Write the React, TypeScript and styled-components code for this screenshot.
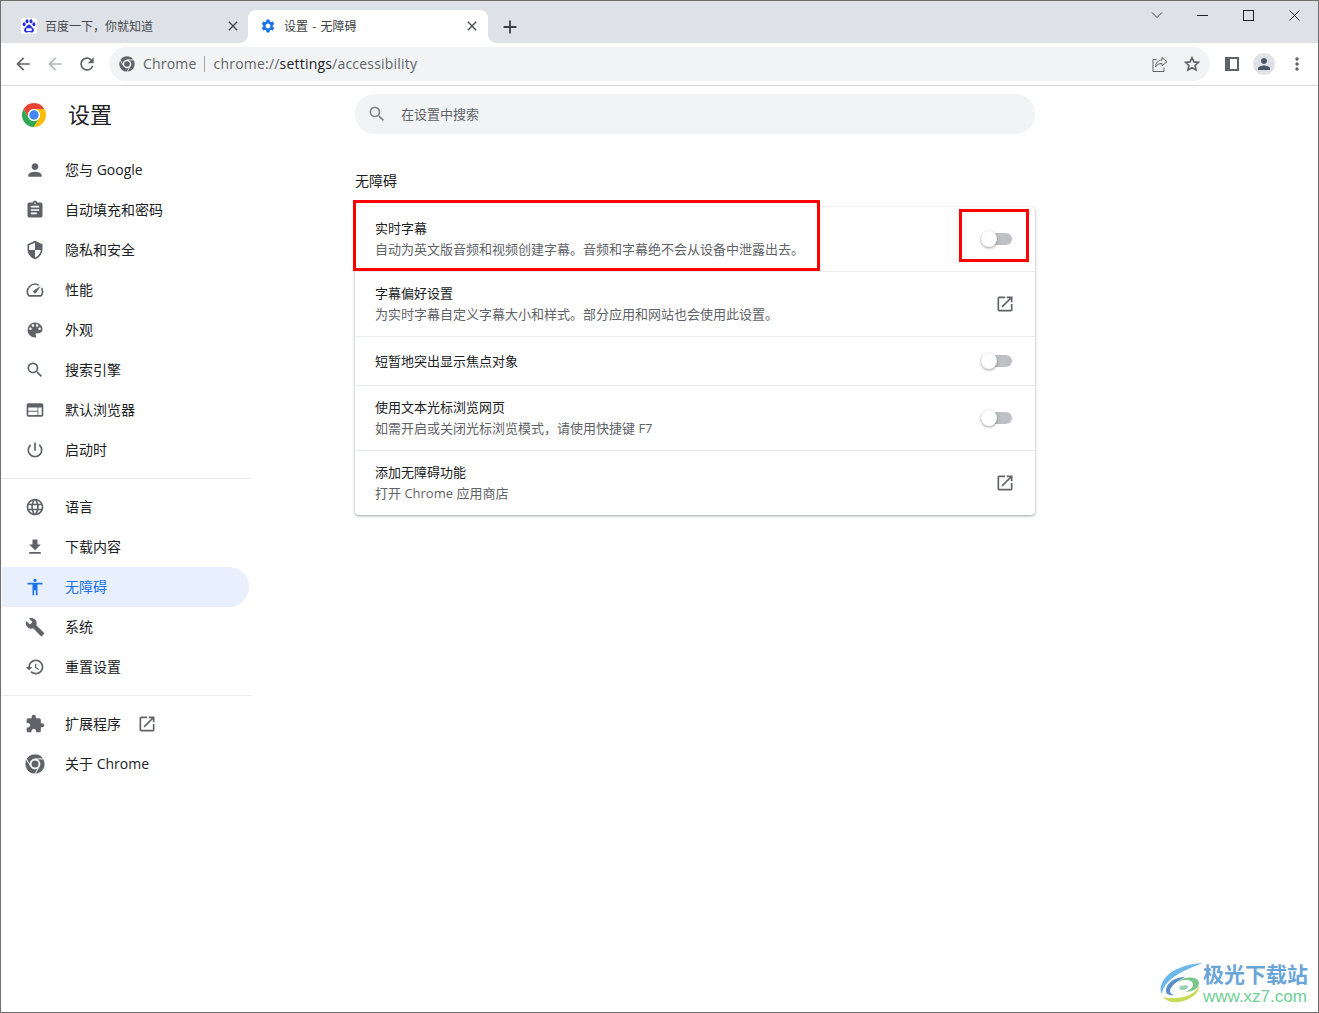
import React from 'react';
import styled, { createGlobalStyle } from 'styled-components';

const Global = createGlobalStyle`
  html, body { margin: 0; padding: 0; background: #fff; }
  * { box-sizing: border-box; }
  body { font-family: "Open Sans", "Noto Sans CJK SC", sans-serif; }
`;

const P = {
  person: 'M12 12c2.21 0 4-1.79 4-4s-1.79-4-4-4-4 1.79-4 4 1.79 4 4 4zm0 2c-2.67 0-8 1.34-8 4v2h16v-2c0-2.66-5.33-4-8-4z',
  assignment: 'M19 3h-4.18C14.4 1.84 13.3 1 12 1c-1.3 0-2.4.84-2.82 2H5c-1.1 0-2 .9-2 2v14c0 1.1.9 2 2 2h14c1.1 0 2-.9 2-2V5c0-1.1-.9-2-2-2zm-7 0c.55 0 1 .45 1 1s-.45 1-1 1-1-.45-1-1 .45-1 1-1zm2 14H7v-2h7v2zm3-4H7v-2h10v2zm0-4H7V7h10v2z',
  shield: 'M12 1L3 5v6c0 5.55 3.84 10.74 9 12 5.16-1.26 9-6.45 9-12V5l-9-4zm0 10.99h7c-.53 4.12-3.28 7.79-7 8.94V12H5V6.3l7-3.11v8.8z',
  speed: 'M20.38 8.57l-1.23 1.85a8 8 0 0 1-.22 7.58H5.07A8 8 0 0 1 15.58 6.85l1.85-1.23A10 10 0 0 0 3.35 19a2 2 0 0 0 1.72 1h13.85a2 2 0 0 0 1.74-1 10 10 0 0 0-.27-10.44zm-9.79 6.84a2 2 0 0 0 2.83 0l5.66-8.49-8.49 5.66a2 2 0 0 0 0 2.83z',
  palette: 'M12 3a9 9 0 0 0 0 18c.83 0 1.5-.67 1.5-1.5 0-.39-.15-.74-.39-1.01-.23-.26-.38-.61-.38-.99 0-.83.67-1.5 1.5-1.5H16c2.76 0 5-2.24 5-5 0-4.42-4.03-8-9-8zm-5.5 9c-.83 0-1.5-.67-1.5-1.5S5.67 9 6.5 9 8 9.67 8 10.5 7.33 12 6.5 12zm3-4C8.67 8 8 7.33 8 6.5S8.67 5 9.5 5s1.5.67 1.5 1.5S10.33 8 9.5 8zm5 0c-.83 0-1.5-.67-1.5-1.5S13.67 5 14.5 5s1.5.67 1.5 1.5S15.33 8 14.5 8zm3 4c-.83 0-1.5-.67-1.5-1.5S16.67 9 17.5 9s1.5.67 1.5 1.5-.67 1.5-1.5 1.5z',
  search: 'M15.5 14h-.79l-.28-.27A6.471 6.471 0 0 0 16 9.5 6.5 6.5 0 1 0 9.5 16c1.61 0 3.09-.59 4.23-1.57l.27.28v.79l5 4.99L20.49 19l-4.99-5zm-6 0C7.01 14 5 11.99 5 9.5S7.01 5 9.5 5 14 7.01 14 9.5 11.99 14 9.5 14z',
  web: 'M20 4H4c-1.11 0-2 .9-2 2v12c0 1.1.89 2 2 2h16c1.1 0 2-.9 2-2V6c0-1.1-.89-2-2-2zm-5 14H4v-4h11v4zm0-5H4V9h11v4zm5 5h-4V9h4v9z',
  power: 'M13 3h-2v10h2V3zm4.83 2.17l-1.42 1.42C17.99 7.86 19 9.81 19 12c0 3.87-3.13 7-7 7s-7-3.13-7-7c0-2.19 1.01-4.14 2.58-5.42L6.17 5.17C4.23 6.82 3 9.26 3 12c0 4.97 4.03 9 9 9s9-4.03 9-9c0-2.74-1.23-5.18-3.17-6.83z',
  language: 'M11.99 2C6.47 2 2 6.48 2 12s4.47 10 9.99 10C17.52 22 22 17.52 22 12S17.52 2 11.99 2zm6.93 6h-2.95c-.32-1.25-.78-2.45-1.38-3.56 1.84.63 3.37 1.91 4.33 3.56zM12 4.04c.83 1.2 1.48 2.53 1.91 3.96h-3.82c.43-1.43 1.08-2.76 1.91-3.96zM4.26 14C4.1 13.36 4 12.69 4 12s.1-1.36.26-2h3.38c-.08.66-.14 1.32-.14 2 0 .68.06 1.34.14 2H4.26zm.82 2h2.95c.32 1.25.78 2.45 1.38 3.56-1.84-.63-3.37-1.9-4.33-3.56zm2.95-8H5.08c.96-1.66 2.49-2.93 4.33-3.56C8.81 5.55 8.35 6.75 8.03 8zM12 19.96c-.83-1.2-1.48-2.53-1.91-3.96h3.82c-.43 1.43-1.08 2.76-1.91 3.96zM14.34 14H9.66c-.09-.66-.16-1.32-.16-2 0-.68.07-1.35.16-2h4.68c.09.65.16 1.32.16 2 0 .68-.07 1.34-.16 2zm.25 5.56c.6-1.11 1.06-2.31 1.38-3.56h2.95c-.96 1.65-2.49 2.93-4.33 3.56zM16.36 14c.08-.66.14-1.32.14-2 0-.68-.06-1.34-.14-2h3.38c.16.64.26 1.31.26 2s-.1 1.36-.26 2h-3.38z',
  download: 'M19 9h-4V3H9v6H5l7 7 7-7zM5 18v2h14v-2H5z',
  access: 'M12 2c1.1 0 2 .9 2 2s-.9 2-2 2-2-.9-2-2 .9-2 2-2zm9 7h-6v13h-2v-6h-2v6H9V9H3V7h18v2z',
  build: 'M22.7 19l-9.1-9.1c.9-2.3.4-5-1.5-6.9-2-2-5-2.4-7.4-1.3L9 6 6 9 1.6 4.7C.4 7.1.9 10.1 2.9 12.1c1.9 1.9 4.6 2.4 6.9 1.5l9.1 9.1c.4.4 1 .4 1.4 0l2.3-2.3c.5-.4.5-1.1.1-1.4z',
  restore: 'M13 3c-4.97 0-9 4.03-9 9H1l3.89 3.89.07.14L9 12H6c0-3.87 3.13-7 7-7s7 3.13 7 7-3.13 7-7 7c-1.93 0-3.68-.79-4.94-2.06l-1.42 1.42C8.27 19.99 10.51 21 13 21c4.97 0 9-4.03 9-9s-4.03-9-9-9zm-1 5v5l4.28 2.54.72-1.21-3.5-2.08V8H12z',
  extension: 'M20.5 11H19V7c0-1.1-.9-2-2-2h-4V3.5C13 2.12 11.88 1 10.5 1S8 2.12 8 3.5V5H4c-1.1 0-1.99.9-1.99 2v3.8H3.5c1.49 0 2.7 1.21 2.7 2.7s-1.21 2.7-2.7 2.7H2V20c0 1.1.9 2 2 2h3.8v-1.5c0-1.49 1.21-2.7 2.7-2.7 1.49 0 2.7 1.21 2.7 2.7V22H17c1.1 0 2-.9 2-2v-4h1.5c1.38 0 2.5-1.12 2.5-2.5S21.88 11 20.5 11z',
  open: 'M19 19H5V5h7V3H5a2 2 0 0 0-2 2v14a2 2 0 0 0 2 2h14c1.1 0 2-.9 2-2v-7h-2v7zM14 3v2h3.59l-9.83 9.83 1.41 1.41L19 6.41V10h2V3h-7z',
  gear: 'M19.14 12.94c.04-.3.06-.61.06-.94 0-.32-.02-.64-.07-.94l2.03-1.58a.49.49 0 0 0 .12-.61l-1.92-3.32a.488.488 0 0 0-.59-.22l-2.39.96c-.5-.38-1.03-.7-1.62-.94l-.36-2.54a.484.484 0 0 0-.48-.41h-3.84c-.24 0-.43.17-.47.41l-.36 2.54c-.59.24-1.13.57-1.62.94l-2.39-.96c-.22-.08-.47 0-.59.22L2.74 8.87c-.12.21-.08.47.12.61l2.03 1.58c-.05.3-.09.63-.09.94s.02.64.07.94l-2.03 1.58a.49.49 0 0 0-.12.61l1.92 3.32c.12.22.37.29.59.22l2.39-.96c.5.38 1.03.7 1.62.94l.36 2.54c.05.24.24.41.48.41h3.84c.24 0 .44-.17.47-.41l.36-2.54c.59-.24 1.13-.56 1.62-.94l2.39.96c.22.08.47 0 .59-.22l1.92-3.32c.12-.22.07-.47-.12-.61l-2.01-1.58zM12 15.6c-1.98 0-3.6-1.62-3.6-3.6s1.62-3.6 3.6-3.6 3.6 1.62 3.6 3.6-1.62 3.6-3.6 3.6z',
  reload: 'M17.65 6.35A7.958 7.958 0 0 0 12 4c-4.42 0-7.99 3.58-7.99 8s3.57 8 7.99 8c3.73 0 6.84-2.55 7.73-6h-2.08A5.99 5.99 0 0 1 12 18c-3.31 0-6-2.69-6-6s2.69-6 6-6c1.66 0 3.14.69 4.22 1.78L13 11h7V4l-2.35 2.35z',
  arrow: 'M20 11H7.83l5.59-5.59L12 4l-8 8 8 8 1.41-1.41L7.83 13H20v-2z',
  more: 'M12 8c1.1 0 2-.9 2-2s-.9-2-2-2-2 .9-2 2 .9 2 2 2zm0 2c-1.1 0-2 .9-2 2s.9 2 2 2 2-.9 2-2-.9-2-2-2zm0 6c-1.1 0-2 .9-2 2s.9 2 2 2 2-.9 2-2-.9-2-2-2z',
  plus: 'M19 13h-6v6h-2v-6H5v-2h6V5h2v6h6v2z',
  close: 'M19 6.41L17.59 5 12 10.59 6.41 5 5 6.41 10.59 12 5 17.59 6.41 19 12 13.41 17.59 19 19 17.59 13.41 12z',
};

const Icon = ({ d, size = 20, color = '#5f6368' }: { d: string; size?: number; color?: string }) => (
  <svg width={size} height={size} viewBox="0 0 24 24" fill={color} style={{ display: 'block', flex: 'none' }}>
    <path d={d} />
  </svg>
);

const ChromeColor = ({ size }: { size: number }) => (
  <svg width={size} height={size} viewBox="0 0 24 24" style={{ display: 'block' }}>
    <path fill="#ea4335" d="M12 6H22.39A12 12 0 0 0 1.6 6L6.8 15A6 6 0 0 1 12 6Z" />
    <path fill="#34a853" d="M6.8 15L1.6 6A12 12 0 0 0 12 24L17.2 15A6 6 0 0 1 6.8 15Z" />
    <path fill="#fbbc04" d="M17.2 15L12 24A12 12 0 0 0 22.39 6H12A6 6 0 0 1 17.2 15Z" />
    <circle cx="12" cy="12" r="6" fill="#fff" />
    <circle cx="12" cy="12" r="4.7" fill="#4285f4" />
  </svg>
);

const ChromeMono = ({ size }: { size: number }) => (
  <svg width={size} height={size} viewBox="0 0 24 24" style={{ display: 'block', flex: 'none' }}>
    <g fill="#5f6368" stroke="#fff" strokeWidth="0.9">
      <path d="M12 6H22.39A12 12 0 0 0 1.6 6L6.8 15A6 6 0 0 1 12 6Z" />
      <path d="M6.8 15L1.6 6A12 12 0 0 0 12 24L17.2 15A6 6 0 0 1 6.8 15Z" />
      <path d="M17.2 15L12 24A12 12 0 0 0 22.39 6H12A6 6 0 0 1 17.2 15Z" />
    </g>
    <circle cx="12" cy="12" r="4.2" fill="#5f6368" />
  </svg>
);

const BaiduIcon = () => (
  <svg width="16" height="16" viewBox="0 0 16 16" style={{ display: 'block', flex: 'none' }}>
    <rect width="16" height="16" rx="2" fill="#fff" />
    <g fill="#2932e1">
      <ellipse cx="3.1" cy="6.2" rx="1.5" ry="2" />
      <ellipse cx="6" cy="3.3" rx="1.5" ry="2.1" />
      <ellipse cx="10" cy="3.3" rx="1.5" ry="2.1" />
      <ellipse cx="12.9" cy="6.2" rx="1.5" ry="2" />
      <path d="M8 6.6c-1.5 0-2.1 1.5-3.2 2.6C3.6 10.3 2.6 11.5 3.2 13c.5 1.3 1.9 1.7 2.8 1.5.8-.2 1.3-.4 2-.4s1.2.2 2 .4c.9.2 2.3-.2 2.8-1.5.6-1.5-.4-2.7-1.6-3.8C10.1 8.1 9.5 6.6 8 6.6z" />
    </g>
    <rect x="5.2" y="10.3" width="5.6" height="2.8" rx="1" fill="#fff" />
  </svg>
);

const Windowed = styled.div`
  position: relative;
  width: 1319px;
  height: 1013px;
  border: 1px solid #6f6f6f;
  background: #fff;
  overflow: hidden;
  display: flex;
  flex-direction: column;
`;

const TitleBar = styled.div`
  height: 42px;
  flex: none;
  background: #dee1e6;
  display: flex;
  align-items: flex-end;
  padding-left: 8px;
`;

const Tab = styled.div<{ $active?: boolean }>`
  position: relative;
  width: ${p => (p.$active ? 240 : 239)}px;
  height: 33px;
  display: flex;
  align-items: center;
  padding: 0 ${p => (p.$active ? 8 : 7)}px 2px 12px;
  gap: 8px;
  font-size: 12px;
  border-radius: 8px 8px 0 0;
  color: ${p => (p.$active ? '#3c4043' : '#45494e')};
  background: ${p => (p.$active ? '#fff' : 'transparent')};
  ${p =>
    p.$active &&
    `
    &::before, &::after {
      content: '';
      position: absolute;
      bottom: 0;
      width: 8px;
      height: 8px;
      background: radial-gradient(circle at 0 0, #dee1e6 7.5px, #fff 8px);
    }
    &::before { left: -8px; }
    &::after { right: -8px; background: radial-gradient(circle at 100% 0, #dee1e6 7.5px, #fff 8px); }
  `}
`;

const TabLabel = styled.span`
  flex: 1;
  white-space: nowrap;
  overflow: hidden;
  word-spacing: 1.5px;
  font-family: "Noto Sans CJK SC", sans-serif;
`;

const NewTab = styled.div`
  margin-left: 11px;
  height: 33px;
  display: flex;
  align-items: center;
`;

const WinControls = styled.div`
  margin-left: auto;
  padding-right: 1px;
  align-self: flex-start;
  display: flex;
`;

const WinBtn = styled.div`
  width: 46px;
  height: 28px;
  display: flex;
  align-items: center;
  justify-content: center;
`;

const ChevronBtn = styled(WinBtn)`
  width: 44px;
`;

const Toolbar = styled.div`
  height: 43px;
  flex: none;
  background: #fff;
  border-bottom: 1px solid #d9d9d9;
  display: flex;
  align-items: center;
  padding: 0 0 1px 6px;
`;

const NavBtn = styled.div`
  width: 32px;
  height: 34px;
  display: flex;
  align-items: center;
  justify-content: center;
`;

const Omnibox = styled.div`
  width: 1101px;
  height: 34px;
  margin-left: 6px;
  border-radius: 17px;
  background: #f1f3f4;
  display: flex;
  align-items: center;
  padding: 0 8px 0 10px;
  font-size: 14px;
  letter-spacing: 0.2px;
  color: #5f6368;
  white-space: nowrap;
`;

const OriginChip = styled.span`
  margin-left: 8px;
  padding-right: 7px;
  border-right: 1px solid #a0a4a8;
  line-height: 16px;
`;

const Url = styled.span`
  margin-left: 9px;
`;

const UrlStrong = styled.span`
  color: #202124;
`;

const OmniActions = styled.div`
  margin-left: auto;
  display: flex;
  gap: 12px;
  align-items: center;
`;

const ToolActions = styled.div`
  display: flex;
  align-items: center;
  margin-left: 15px;
`;

const PanelIcon = styled.div`
  width: 14px;
  height: 14px;
  background: #fff;
  border: 2px solid #5f6368;
  border-left-width: 5px;
`;

const Avatar = styled.div`
  width: 22px;
  height: 22px;
  margin-left: 14px;
  border-radius: 50%;
  background: #dee1e6;
  display: flex;
  align-items: center;
  justify-content: center;
`;

const MenuBtn = styled.div`
  margin-left: 12px;
`;

const Body = styled.div`
  flex: 1;
  display: flex;
  min-height: 0;
`;

const Sidebar = styled.nav`
  width: 250px;
  flex: none;
`;

const Brand = styled.div`
  height: 64px;
  display: flex;
  align-items: center;
  padding: 0 0 6px 21px;
`;

const BrandTitle = styled.h1`
  margin: 0 0 0 22px;
  padding-bottom: 4px;
  font-size: 22px;
  font-weight: 400;
  color: #202124;
  font-family: "Noto Sans CJK SC", sans-serif;
`;

const NavList = styled.div`
  display: flex;
  flex-direction: column;
`;

const NavItem = styled.div<{ $active?: boolean }>`
  height: 40px;
  display: flex;
  align-items: center;
  margin-left: ${p => (p.$active ? '1px' : '0')};
  padding-left: ${p => (p.$active ? '23px' : '24px')};
  width: ${p => (p.$active ? '247px' : '248px')};
  border-radius: ${p => (p.$active ? '0 20px 20px 0' : '0')};
  background: ${p => (p.$active ? '#e8f0fe' : 'transparent')};
  color: ${p => (p.$active ? '#1a73e8' : '#202124')};
  font-size: 14px;
  font-weight: 400;
`;

const NavText = styled.span`
  margin-left: 20px;
  padding-bottom: 2px;
  white-space: nowrap;
`;

const NavExternal = styled.span`
  margin-left: 16px;
`;

const NavDivider = styled.div<{ $before: number; $after: number }>`
  height: 1px;
  width: 250px;
  background: #e8eaed;
  margin: ${p => p.$before}px 0 ${p => p.$after}px;
`;

const Main = styled.main`
  width: 680px;
  margin-left: 104px;
  flex: none;
`;

const SearchBox = styled.div`
  margin-top: 8px;
  height: 40px;
  border-radius: 20px;
  background: #f1f3f4;
  display: flex;
  align-items: center;
  padding-left: 12px;
  gap: 14px;
  font-size: 13px;
  color: #5f6368;
  font-family: "Noto Sans CJK SC", sans-serif;
`;

const SearchPlaceholder = styled.span`
  padding-bottom: 2px;
`;

const SectionTitle = styled.h2`
  margin: 36px 0 0;
  height: 22px;
  line-height: 22px;
  font-size: 14px;
  font-weight: 400;
  color: #202124;
`;

const Card = styled.section`
  margin-top: 15px;
  background: #fff;
  border-radius: 4px;
  box-shadow: 0 1px 2px rgba(60, 64, 67, 0.3), 0 1px 3px 1px rgba(60, 64, 67, 0.15);
`;

const Row = styled.div<{ $first?: boolean; $short?: boolean }>`
  height: ${p => (p.$short ? 48 : 64) + (p.$first ? 0 : 1)}px;
  border-top: ${p => (p.$first ? 'none' : '1px solid #e8eaed')};
  display: flex;
  align-items: center;
  padding: 0 20px;
`;

const RowText = styled.div`
  flex: 1;
  font-size: 13px;
  line-height: 20px;
  padding-bottom: 1px;
`;

const RowTitle = styled.div`
  color: #202124;
`;

const RowSub = styled.div`
  padding-top: 1px;
  color: #5f6368;
`;

const Toggle = styled.div`
  position: relative;
  width: 31px;
  height: 12px;
  margin-right: 3px;
  border-radius: 6px;
  background: #bdc1c6;
`;

const Thumb = styled.div`
  position: absolute;
  left: 0;
  top: -2px;
  width: 16px;
  height: 16px;
  border-radius: 50%;
  background: #fff;
  box-shadow: 0 1px 3px rgba(0, 0, 0, 0.4);
`;

const RedBox = styled.div<{ $x: number; $y: number; $w: number; $h: number }>`
  position: absolute;
  left: ${p => p.$x}px;
  top: ${p => p.$y}px;
  width: ${p => p.$w}px;
  height: ${p => p.$h}px;
  border: 3px solid #ff0000;
  pointer-events: none;
`;

const Watermark = styled.div`
  position: absolute;
  right: 10px;
  bottom: 7px;
  display: flex;
  align-items: flex-start;
`;

const MarkText = styled.div`
  display: flex;
  flex-direction: column;
`;

const MarkTitle = styled.div`
  font-size: 21px;
  line-height: 20px;
  height: 20px;
  font-weight: 700;
  color: #6aa5d8;
  font-family: "Noto Sans CJK SC", sans-serif;
  white-space: nowrap;
`;

const MarkUrl = styled.div`
  margin-top: 5px;
  font-size: 17px;
  line-height: 17px;
  color: #6fcf97;
  font-family: "Liberation Sans", sans-serif;
  white-space: nowrap;
`;

const MarkLogo = () => (
  <svg width="43" height="41" viewBox="0 0 43 41" style={{ display: 'block' }}>
    <path fill="#6db8ea" d="M43 0C27 1 9 6 2 20c-2 4-2 8 0 11 1-9 8-15 18-21 7-4 15-7 23-10z" />
    <path fill="#5b8fc9" d="M25 14c-8 0-17 4-19 12-1 5 3 7 8 6-4-1-5-4-3-7 3-5 9-8 14-11z" />
    <path fill="#7ac68d" d="M17 19c5-2 12-3 15 0 3 4-1 8-7 10 8 0 14-4 14-9 0-6-12-8-22-1z" />
    <path fill="#c8dc58" d="M39 22c-2 8-14 14-28 13-3 0-6 0-8-1 3 4 9 6 16 5 12-2 21-9 20-17z" />
    <path fill="#9ad0b0" d="M21 23c3-1 6-1 7 0 1 2-2 4-6 4-3 0-4-3-1-4z" />
  </svg>
);

type Item = { d: string; label: string; active?: boolean; ext?: boolean };

const G1: Item[] = [
  { d: P.person, label: '您与 Google' },
  { d: P.assignment, label: '自动填充和密码' },
  { d: P.shield, label: '隐私和安全' },
  { d: P.speed, label: '性能' },
  { d: P.palette, label: '外观' },
  { d: P.search, label: '搜索引擎' },
  { d: P.web, label: '默认浏览器' },
  { d: P.power, label: '启动时' },
];
const G2: Item[] = [
  { d: P.language, label: '语言' },
  { d: P.download, label: '下载内容' },
  { d: P.access, label: '无障碍', active: true },
  { d: P.build, label: '系统' },
  { d: P.restore, label: '重置设置' },
];
const G3: Item[] = [{ d: P.extension, label: '扩展程序', ext: true }];

const Nav = ({ it }: { it: Item }) => (
  <NavItem $active={it.active}>
    <Icon d={it.d} color={it.active ? '#1a73e8' : '#5f6368'} />
    <NavText>{it.label}</NavText>
    {it.ext && (
      <NavExternal>
        <Icon d={P.open} />
      </NavExternal>
    )}
  </NavItem>
);

const Switch = () => (
  <Toggle>
    <Thumb />
  </Toggle>
);

export default function App() {
  return (
    <Windowed>
      <Global />
      <TitleBar>
        <Tab>
          <BaiduIcon />
          <TabLabel>百度一下，你就知道</TabLabel>
          <Icon d={P.close} size={16} color="#45494e" />
        </Tab>
        <Tab $active>
          <Icon d={P.gear} size={16} color="#1a73e8" />
          <TabLabel>设置 - 无障碍</TabLabel>
          <Icon d={P.close} size={16} color="#45494e" />
        </Tab>
        <NewTab>
          <Icon d={P.plus} size={22} color="#3c4043" />
        </NewTab>
        <WinControls>
          <ChevronBtn>
            <svg width="12" height="8" viewBox="0 0 12 8"><path d="M1 1.5l5 5 5-5" fill="none" stroke="#3c4043" /></svg>
          </ChevronBtn>
          <WinBtn>
            <svg width="11" height="11" viewBox="0 0 11 11"><path d="M0 5.5h11" stroke="#202124" /></svg>
          </WinBtn>
          <WinBtn>
            <svg width="11" height="11" viewBox="0 0 11 11"><rect x=".5" y=".5" width="10" height="10" fill="none" stroke="#202124" /></svg>
          </WinBtn>
          <WinBtn>
            <svg width="11" height="11" viewBox="0 0 11 11"><path d="M.5.5l10 10M10.5.5l-10 10" stroke="#202124" /></svg>
          </WinBtn>
        </WinControls>
      </TitleBar>
      <Toolbar>
        <NavBtn><Icon d={P.arrow} size={20} /></NavBtn>
        <NavBtn><Icon d={P.arrow} size={20} color="#b4b6b8" /></NavBtn>
        <NavBtn><Icon d={P.reload} size={20} /></NavBtn>
        <Omnibox>
          <ChromeMono size={16} />
          <OriginChip>Chrome</OriginChip>
          <Url>
            chrome://<UrlStrong>settings</UrlStrong>/accessibility
          </Url>
          <OmniActions>
            <svg width="20" height="20" viewBox="0 0 20 20" fill="none" stroke="#5f6368" strokeWidth="1">
              <path d="M6.5 5.5H3v12h11v-4" />
              <path d="M12 3.5l5 4.3-5 4V9.5c-3 0-5 1-6.5 3.5 0-4 2.5-6.8 6.5-7z" />
            </svg>
            <svg width="20" height="20" viewBox="0 0 24 24" fill="none" stroke="#5f6368" strokeWidth="2">
              <path d="M12 4.5l2.3 5 5.4.6-4 3.7 1.1 5.3-4.8-2.7-4.8 2.7 1.1-5.3-4-3.7 5.4-.6z" />
            </svg>
          </OmniActions>
        </Omnibox>
        <ToolActions>
          <PanelIcon />
          <Avatar>
            <Icon d={P.person} size={18} color="#4a5568" />
          </Avatar>
          <MenuBtn>
            <Icon d={P.more} size={20} />
          </MenuBtn>
        </ToolActions>
      </Toolbar>
      <Body>
        <Sidebar>
          <Brand>
            <ChromeColor size={24} />
            <BrandTitle>设置</BrandTitle>
          </Brand>
          <NavList>
            {G1.map(i => <Nav key={i.label} it={i} />)}
            <NavDivider $before={8} $after={8} />
            {G2.map(i => <Nav key={i.label} it={i} />)}
            <NavDivider $before={8} $after={8} />
            {G3.map(i => <Nav key={i.label} it={i} />)}
            <NavItem>
              <ChromeMono size={20} />
              <NavText>关于 Chrome</NavText>
            </NavItem>
          </NavList>
        </Sidebar>
        <Main>
          <SearchBox>
            <Icon d={P.search} size={20} color="#80868b" />
            <SearchPlaceholder>在设置中搜索</SearchPlaceholder>
          </SearchBox>
          <SectionTitle>无障碍</SectionTitle>
          <Card>
            <Row $first>
              <RowText>
                <RowTitle>实时字幕</RowTitle>
                <RowSub>自动为英文版音频和视频创建字幕。音频和字幕绝不会从设备中泄露出去。</RowSub>
              </RowText>
              <Switch />
            </Row>
            <Row>
              <RowText>
                <RowTitle>字幕偏好设置</RowTitle>
                <RowSub>为实时字幕自定义字幕大小和样式。部分应用和网站也会使用此设置。</RowSub>
              </RowText>
              <Icon d={P.open} />
            </Row>
            <Row $short>
              <RowText>
                <RowTitle>短暂地突出显示焦点对象</RowTitle>
              </RowText>
              <Switch />
            </Row>
            <Row>
              <RowText>
                <RowTitle>使用文本光标浏览网页</RowTitle>
                <RowSub>如需开启或关闭光标浏览模式，请使用快捷键 F7</RowSub>
              </RowText>
              <Switch />
            </Row>
            <Row>
              <RowText>
                <RowTitle>添加无障碍功能</RowTitle>
                <RowSub>打开 Chrome 应用商店</RowSub>
              </RowText>
              <Icon d={P.open} />
            </Row>
          </Card>
        </Main>
      </Body>
      <RedBox $x={352} $y={199} $w={467} $h={71} />
      <RedBox $x={958} $y={208} $w={70} $h={53} />
      <Watermark>
        <MarkLogo />
        <MarkText>
          <MarkTitle>极光下载站</MarkTitle>
          <MarkUrl>www.xz7.com</MarkUrl>
        </MarkText>
      </Watermark>
    </Windowed>
  );
}
